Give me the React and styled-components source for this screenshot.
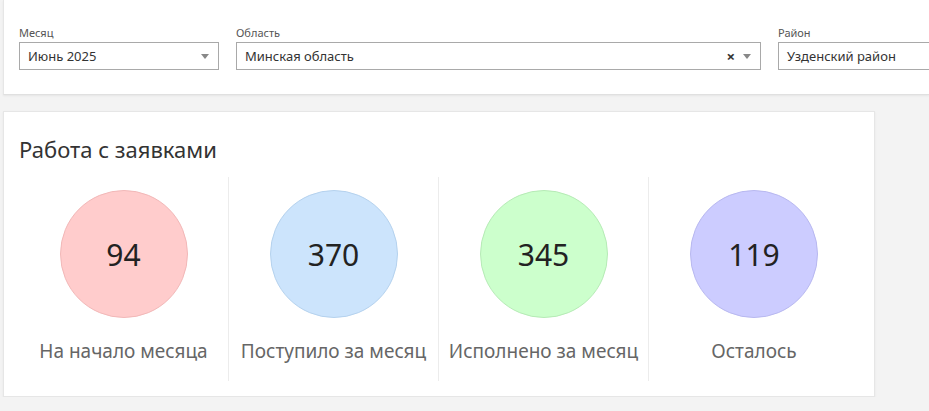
import React from "react"
import styled, { createGlobalStyle } from "styled-components"

const GlobalStyle = createGlobalStyle`
  html, body {
    margin: 0;
    padding: 0;
    background: #f3f3f3;
    overflow: hidden;
  }
  body {
    font-family: "Segoe UI", "Noto Sans", "Open Sans", sans-serif;
    color: #333;
  }
`

const filters = [
  { label: "Месяц", value: "Июнь 2025", width: 200 },
  { label: "Область", value: "Минская область", width: 525, clearable: true },
  { label: "Район", value: "Узденский район", width: 200 },
]

const stats = [
  { value: 94, label: "На начало месяца", fill: "#ffcccc", edge: "#f2b8b8" },
  { value: 370, label: "Поступило за месяц", fill: "#cce4fc", edge: "#b5d2ee" },
  { value: 345, label: "Исполнено за месяц", fill: "#ccffcc", edge: "#b6ebb6" },
  { value: 119, label: "Осталось", fill: "#ccccff", edge: "#b8b8f0" },
]

const App = () => {
  return (
    <Page>
      <GlobalStyle />
      <FilterBar>
        {filters.map((f) => (
          <Field key={f.label} $width={f.width}>
            <FieldLabel>{f.label}</FieldLabel>
            <Select>
              <SelectValue>{f.value}</SelectValue>
              {f.clearable && <Clear>×</Clear>}
              <Arrow />
            </Select>
          </Field>
        ))}
      </FilterBar>

      <Card>
        <CardTitle>Работа с заявками</CardTitle>
        <StatsRow>
          {stats.map((s, i) => (
            <Stat key={s.label} $last={i === stats.length - 1}>
              <Circle $fill={s.fill} $edge={s.edge}>{s.value}</Circle>
              <StatLabel>{s.label}</StatLabel>
            </Stat>
          ))}
        </StatsRow>
      </Card>
    </Page>
  )
}

export default App

const Page = styled.div`
  padding-left: 3px;
`

const FilterBar = styled.div`
  display: flex;
  gap: 17px;
  height: 95px;
  box-sizing: border-box;
  padding: 25px 15px 0;
  background: #fff;
  border-left: 1px solid #e6e6e6;
  border-bottom: 1px solid #e0e0e0;
  box-shadow: 0 1px 2px rgba(0, 0, 0, 0.06);
  overflow: hidden;
`

const Field = styled.div`
  display: flex;
  flex-direction: column;
  width: ${(p) => p.$width}px;
  flex-shrink: 0;
`

const FieldLabel = styled.div`
  font-size: 11px;
  line-height: 15px;
  color: #555;
  margin-bottom: 2px;
`

const Select = styled.div`
  display: flex;
  align-items: center;
  height: 28px;
  box-sizing: border-box;
  border: 1px solid #a9a9a9;
  background: #fff;
  padding: 0 9px 0 8px;
`

const SelectValue = styled.span`
  flex: 1;
  font-size: 13px;
  color: #333;
  white-space: nowrap;
`

const Clear = styled.span`
  font-size: 15px;
  font-weight: bold;
  color: #333;
  margin-right: 8px;
  line-height: 1;
`

const Arrow = styled.span`
  width: 0;
  height: 0;
  border-left: 4px solid transparent;
  border-right: 4px solid transparent;
  border-top: 5px solid #888;
`

const Card = styled.div`
  margin-top: 16px;
  width: 872px;
  box-sizing: border-box;
  background: #fff;
  border: 1px solid #e6e6e6;
  box-shadow: 0 1px 2px rgba(0, 0, 0, 0.06);
  padding: 22px 15px 15px;
`

const CardTitle = styled.h2`
  margin: 0 0 13px;
  font-size: 22px;
  font-weight: 400;
  line-height: 30px;
  color: #333;
`

const StatsRow = styled.div`
  display: grid;
  grid-template-columns: repeat(4, 210px);
`

const Stat = styled.div`
  display: flex;
  flex-direction: column;
  align-items: center;
  height: 204px;
  padding-top: 13px;
  box-sizing: border-box;
  border-right: ${(p) => (p.$last ? "none" : "1px solid #ececec")};
`

const Circle = styled.div`
  width: 128px;
  height: 128px;
  border-radius: 50%;
  box-sizing: border-box;
  background: ${(p) => p.$fill};
  border: 1px solid ${(p) => p.$edge};
  display: flex;
  align-items: center;
  justify-content: center;
  font-size: 30px;
  color: #222;
`

const StatLabel = styled.div`
  margin-top: 20px;
  font-size: 19px;
  color: #666;
  white-space: nowrap;
`
